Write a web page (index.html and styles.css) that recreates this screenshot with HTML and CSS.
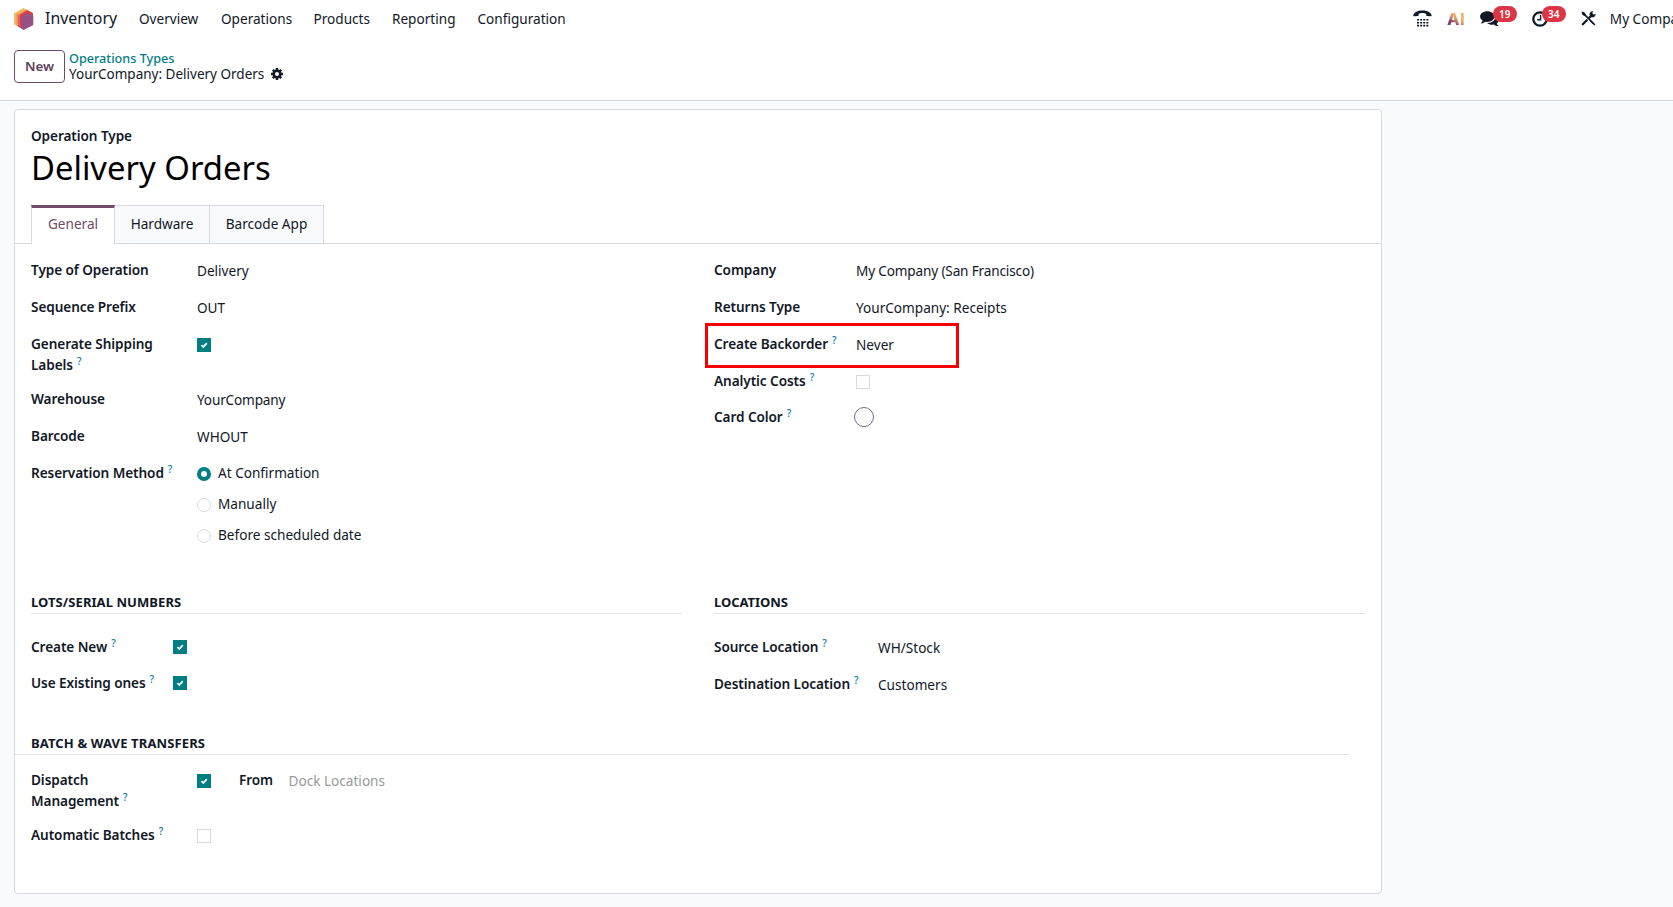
FILE: index.html
```html
<!DOCTYPE html>
<html lang="en">
<head>
<meta charset="utf-8">
<title>YourCompany: Delivery Orders</title>
<link rel="stylesheet" href="styles.css">
</head>
<body>
<svg class="defs" width="0" height="0" aria-hidden="true">
  <symbol id="tick" viewBox="0 0 14 14"><path d="M4.400 7.200l1.900 1.800 3.500-3.800" fill="none" stroke="#fff" stroke-width="1.800"/></symbol>
</svg>

<header class="navbar">
  <svg class="app-icon" viewBox="0 0 20 22">
    <path d="M9.500 0L19 5.300v11L9.500 21.500 0 16.200V5.300z" fill="#f2b768"/>
    <path d="M12 1.400L19 5.300v4L7 20.200l-4.500-2.600V6.800z" fill="#ee8450"/>
    <path d="M13.600 2.300L19 5.300v4L8.500 21 4.300 18.600V7.600z" fill="#de3a45"/>
    <path d="M3.400 8v10M5.500 6.500v12M5.500 5.800l8-4.400" stroke="#f2b768" stroke-width=".8" stroke-dasharray="1 1"/>
    <path d="M13.400 4.600l5.900 3.300v9.200l-9.700 5L7.200 20.500V8.700z" fill="#985184"/>
  </svg>
  <span class="app-name">Inventory</span>
  <nav class="menu">
    <a class="m-overview">Overview</a><a class="m-operations">Operations</a><a class="m-products">Products</a><a class="m-reporting">Reporting</a><a>Configuration</a>
  </nav>
  <div class="systray">
    <svg class="tray-phone" width="19" height="17" viewBox="0 0 19 17">
      <path d="M.3 5.200C1 2 4.600.4 9.400.4s8.500 1.600 9.200 4.800c.1.700-.2 1-.9 1l-3.600-.1c-.6 0-.8-.3-.8-.9V3.900C12.200 3.100 10.900 2.900 9.400 2.900s-2.800.2-3.900 1v1.300c0 .6-.2.900-.8.900l-3.600.1c-.7 0-.9-.3-.8-1z" fill="#111827"/>
      <path d="M4 9.800h11.400M4 12.700h11.400M4 15.600h11.400" stroke="#111827" stroke-width="1.600" stroke-dasharray="2 1.130"/>
    </svg>
    <span class="tray-ai">AI</span>
    <span class="tray-item tray-chat">
      <svg width="19" height="16" viewBox="0 0 19 16">
        <path d="M15.600 5c2 .8 3.200 2.200 3.200 3.900 0 1.400-.8 2.600-2.100 3.500.3.900.9 1.500 1.600 2.100.2.200.1.600-.3.600-1.500 0-2.900-.6-4-1.600-2.700.5-5.400-.2-7-1.600C11.500 12.300 15.700 9.400 15.600 5z" fill="#111827"/>
        <path d="M7.300.2c4 0 7.200 2.400 7.200 5.400S11.300 11 7.300 11c-.7 0-1.300-.1-1.900-.2-1.100.9-2.400 1.500-3.900 1.600-.4 0-.5-.4-.3-.6.600-.6 1.100-1.100 1.500-2C1.100 8.800.1 7.300.1 5.600.1 2.600 3.300.2 7.300.2z" fill="#111827"/>
      </svg>
      <span class="badge">19</span>
    </span>
    <span class="tray-item tray-clock">
      <svg width="16" height="16" viewBox="0 0 16 16">
        <circle cx="8" cy="8" r="6.700" fill="none" stroke="#111827" stroke-width="2.300"/>
        <path d="M8.600 4v4.700H5.200" fill="none" stroke="#111827" stroke-width="1.400"/>
      </svg>
      <span class="badge">34</span>
    </span>
    <svg class="tray-tools" width="15" height="15" viewBox="0 0 15 15">
      <path d="M1.800 1.800L13 13" stroke="#111827" stroke-width="1.700"/>
      <path d="M.6.600l2.600.6 1.700 2.400-1.600 1.500L1.100 3.400z" fill="#111827"/>
      <path d="M9.500 9.300l4.900 4.200-.9 1.100L9 10.500z" fill="#111827"/>
      <path d="M1.800 13.200l4-4M8.200 6.800l3-3" stroke="#111827" stroke-width="2.300" stroke-linecap="round"/>
      <path d="M14.600 2.800a3 3 0 0 1-4.400 3.100A3 3 0 0 1 12.200.300l-1 2 1.400 1.500z" fill="#111827"/>
    </svg>
    <span class="company">My Company (San Francisco)</span>
  </div>
</header>

<section class="control-panel">
  <button class="btn-new">New</button>
  <div class="breadcrumb">
    <a class="crumb-parent">Operations Types</a>
    <div class="crumb-current">
      <span>YourCompany: Delivery Orders</span>
      <svg width="12" height="12" viewBox="-6 -6 12 12">
        <circle r="3.250" fill="none" stroke="#111827" stroke-width="2.500"/>
        <path d="M0-6v2M0 6v-2M-6 0h2M6 0h-2M-4.200-4.200l1.500 1.500M4.200 4.200l-1.500-1.500M-4.200 4.200l1.500-1.500M4.200-4.200l-1.500 1.500" stroke="#111827" stroke-width="2.500"/>
      </svg>
    </div>
  </div>
</section>

<main class="content">
  <article class="sheet">
    <div class="title-block">
      <label class="title-label">Operation Type</label>
      <h1 class="title">Delivery Orders</h1>
    </div>
    <div class="tabs">
      <a class="tab tab-active">General</a><a class="tab tab-hardware">Hardware</a><a class="tab tab-barcode">Barcode App</a>
    </div>

    <div class="columns general">
      <div class="group group-main">
        <div class="row"><label>Type of Operation</label><span class="value">Delivery</span></div>
        <div class="row"><label>Sequence Prefix</label><span class="value">OUT</span></div>
        <div class="row row-two"><label>Generate Shipping<br>Labels<sup>?</sup></label><svg class="check check-on"><use href="#tick"/></svg></div>
        <div class="row"><label>Warehouse</label><span class="value value-tight">YourCompany</span></div>
        <div class="row"><label>Barcode</label><span class="value">WHOUT</span></div>
        <div class="row"><label>Reservation Method<sup>?</sup></label>
          <div class="radios">
            <span class="radio"><i class="dot dot-on"></i>At Confirmation</span>
            <span class="radio"><i class="dot"></i>Manually</span>
            <span class="radio"><i class="dot"></i>Before scheduled date</span>
          </div>
        </div>
      </div>
      <div class="group group-company">
        <div class="row"><label>Company</label><span class="value value-tight">My Company (San Francisco)</span></div>
        <div class="row"><label>Returns Type</label><span class="value">YourCompany: Receipts</span></div>
        <div class="row marked"><label>Create Backorder<sup>?</sup></label><span class="value">Never</span></div>
        <div class="row row-analytic"><label>Analytic Costs<sup>?</sup></label><span class="check"></span></div>
        <div class="row"><label>Card Color<sup>?</sup></label><span class="swatch"></span></div>
      </div>
    </div>

    <div class="columns stock">
      <div class="group group-lots">
        <h2>LOTS/SERIAL NUMBERS</h2>
        <div class="row row-check"><label>Create New<sup>?</sup></label><svg class="check check-on"><use href="#tick"/></svg></div>
        <div class="row row-check"><label>Use Existing ones<sup>?</sup></label><svg class="check check-on"><use href="#tick"/></svg></div>
      </div>
      <div class="group group-locations">
        <h2 class="h2-locations">LOCATIONS</h2>
        <div class="row"><label>Source Location<sup>?</sup></label><span class="value">WH/Stock</span></div>
        <div class="row"><label>Destination Location<sup>?</sup></label><span class="value">Customers</span></div>
      </div>
    </div>

    <div class="batch">
      <h2>BATCH &amp; WAVE TRANSFERS</h2>
      <div class="group group-main">
        <div class="row row-two"><label>Dispatch<br>Management<sup>?</sup></label>
          <div class="dispatch"><svg class="check check-on"><use href="#tick"/></svg><label>From</label><span class="value placeholder">Dock Locations</span></div>
        </div>
        <div class="row"><label>Automatic Batches<sup>?</sup></label><span class="check"></span></div>
      </div>
    </div>
  </article>
</main>
</body>
</html>
```
FILE: styles.css
```css
*, *::after { box-sizing: border-box; }
html, body { height: 100%; }
body {
  margin: 0;
  overflow: hidden;
  display: flex;
  flex-direction: column;
  background: #f9fafb;
  color: #111827;
  font: 13.6px/21px "Noto Sans", sans-serif;
}
.defs { position: absolute; }
svg { display: block; flex: none; }

/* Top bar */
.navbar {
  flex: none;
  height: 46px;
  padding: 0 0 9px 14px;
  display: flex;
  align-items: center;
  background: #fff;
  white-space: nowrap;
  overflow: hidden;
}
.app-icon { width: 20px; height: 22px; }
.app-name { margin-left: 11px; width: 94px; font-size: 15.900px; }
.menu { display: flex; }
.m-overview { width: 82px; }
.m-operations { width: 92.500px; }
.m-products { width: 78.500px; }
.m-reporting { width: 85.500px; }
.systray {
  margin-left: auto;
  width: 260px;
  flex: none;
  display: flex;
  align-items: center;
}
.tray-ai {
  width: 19px;
  margin-left: 15px;
  font: 800 16.500px/20px Inter, sans-serif;
  letter-spacing: 0.2px;
  background: linear-gradient(35deg, #7a4376 30%, #c58a68 46%, #f2b46a 60%);
  -webkit-background-clip: text;
  background-clip: text;
  color: transparent;
}
.tray-item { position: relative; }
.tray-chat { width: 19px; margin-left: 15px; }
.tray-clock { margin-left: 33px; }
.badge {
  position: absolute;
  top: -5px;
  left: 13px;
  width: 24px;
  height: 16px;
  border-radius: 8px;
  background: #dc3545;
  color: #fff;
  font: 600 10px/16px "Noto Sans", sans-serif;
  text-align: center;
}
.tray-clock .badge { left: 10px; }
.tray-tools { margin-left: 33px; }
.company { margin-left: 14px; }

/* Control panel */
.control-panel {
  flex: none;
  height: 55px;
  padding: 4px 0 0 14px;
  display: flex;
  align-items: flex-start;
  background: #fff;
  border-bottom: 1px solid #d8dadd;
}
.btn-new {
  width: 51px;
  height: 33px;
  padding: 0;
  border: 1px solid #714b67;
  border-radius: 4px;
  background: #fff;
  color: #5e4058;
  font: 600 13.300px/21px "Noto Sans", sans-serif;
}
.breadcrumb { margin-left: 4px; }
.crumb-parent {
  display: block;
  color: #017e84;
  font-size: 12.650px;
  font-weight: 500;
  line-height: 16px;
}
.crumb-current { display: flex; align-items: center; gap: 7px; line-height: 16px; font-size: 13.500px; }

/* Sheet */
.content { flex: 1; padding: 8px 14px; }
.sheet {
  width: 1368px;
  height: 785px;
  background: #fff;
  border: 1px solid #d8dadd;
  border-radius: 4px;
}
.title-block { height: 95px; padding: 15px 16px 0; }
.title-label { display: block; line-height: 21px; }
.title { margin: 1px 0 0; color: #000; font-size: 32.800px; font-weight: 400; line-height: 42px; }
.tabs {
  height: 39px;
  padding-left: 16px;
  display: flex;
  border-bottom: 1px solid #d8dadd;
}
.tab {
  height: 38px;
  border: 1px solid #d8dadd;
  border-width: 1px 1px 0 0;
  background: #f9fafb;
  line-height: 36px;
  text-align: center;
}
.tab-active {
  width: 84px;
  height: 39px;
  border-left-width: 1px;
  border-top: 3px solid #714b67;
  background: #fff;
  color: #714b67;
  line-height: 32px;
}
.tab-hardware { width: 95px; }
.tab-barcode { width: 114px; }

/* Field groups */
.columns { display: grid; grid-template-columns: 651px 651px; column-gap: 32px; padding: 0 16px; }
.general { height: 331px; padding-top: 15px; }
.row { display: grid; height: 37px; align-items: start; }
.row-two { height: 55px; }
.group-main .row { grid-template-columns: 166px 1fr; }
.group-company .row { grid-template-columns: 142px 1fr; }
.group-lots .row { grid-template-columns: 142px 1fr; }
.group-locations .row { grid-template-columns: 164px 1fr; }
label { font-weight: 600; letter-spacing: -0.08px; white-space: nowrap; }
sup {
  margin-left: 4px;
  color: #0180a5;
  font-size: 10px;
  font-weight: 500;
  line-height: 0;
  vertical-align: 5px;
}
.value { padding-top: 1px; }
.value-tight { letter-spacing: -0.16px; }
.check {
  width: 14px;
  height: 14px;
  margin-top: 5px;
  border: 1px solid #d8dadd;
}
.check-on { border: 0; background: #017e84; }
.row-analytic { height: 36px; }
.row-check { height: 36px; }
.row-check .check { margin-top: 4px; }
.swatch {
  width: 20px;
  height: 20px;
  margin: 1px 0 0 -2px;
  border: 1px solid #6b7280;
  border-radius: 50%;
}
.radios { display: grid; grid-auto-rows: 31px; }
.radio { display: flex; align-items: flex-start; gap: 7px; }
.dot {
  width: 14px;
  height: 14px;
  margin-top: 5px;
  border: 1px solid #d8dadd;
  border-radius: 50%;
}
.dot-on { border: 4px solid #017e84; }
.marked { position: relative; }
.marked::after {
  content: "";
  position: absolute;
  left: -9px;
  top: -10px;
  width: 254px;
  height: 45px;
  border: 3px solid #f80000;
}

h2 {
  margin: 0;
  font-size: 13px;
  font-weight: 700;
  line-height: 21px;
  letter-spacing: 0.07px;
  border-bottom: 1px solid #e2e3e5;
}
.h2-locations { letter-spacing: -0.05px; }
.stock { height: 158px; padding-top: 17px; }
.stock h2 { margin-bottom: 22px; }
.batch h2 { width: 1334px; padding-left: 16px; margin-bottom: 14px; letter-spacing: 0.13px; }
.batch .group-main { padding-left: 16px; }
.dispatch { display: flex; align-items: flex-start; }
.dispatch label { width: 49.500px; margin-left: 28px; }
.placeholder { color: #969a9b; }
```
